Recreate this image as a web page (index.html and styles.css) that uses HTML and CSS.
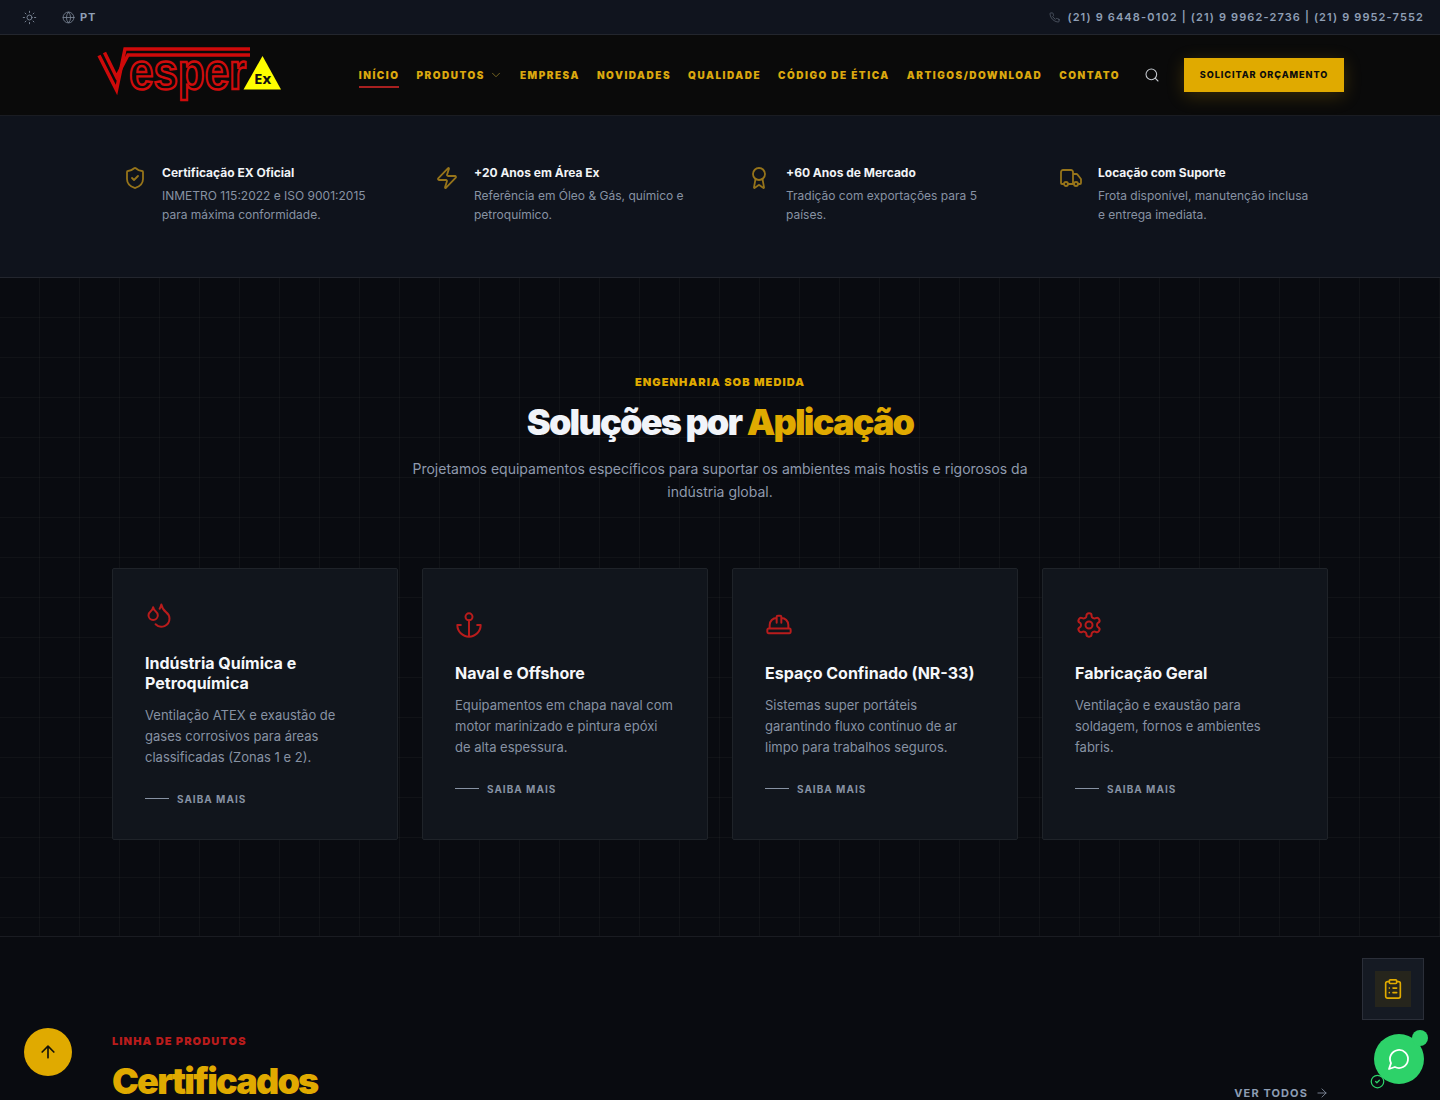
FILE: index.html
```html
<!DOCTYPE html>
<html lang="pt">
<head>
<meta charset="utf-8">
<title>Vesper Ex</title>
<link rel="stylesheet" href="styles.css">
</head>
<body>
<div class="page">
  <div class="topbar">
    <div class="top-left">
      <svg class="ic ic-sun" viewBox="0 0 24 24"><circle cx="12" cy="12" r="4"/><path d="M12 2v2M12 20v2M4.93 4.93l1.41 1.41M17.66 17.66l1.41 1.41M2 12h2M20 12h2M6.34 17.66l-1.41 1.41M19.07 4.93l-1.41 1.41"/></svg>
      <div class="lang">
        <svg class="ic ic-globe" viewBox="0 0 24 24"><circle cx="12" cy="12" r="10"/><path d="M12 2a14.5 14.5 0 0 0 0 20 14.5 14.5 0 0 0 0-20M2 12h20"/></svg>
        <span>PT</span>
      </div>
    </div>
    <div class="top-right">
      <svg class="ic ic-phone" viewBox="0 0 24 24"><path d="M22 16.92v3a2 2 0 0 1-2.18 2 19.79 19.79 0 0 1-8.63-3.07 19.5 19.5 0 0 1-6-6 19.79 19.79 0 0 1-3.07-8.67A2 2 0 0 1 4.11 2h3a2 2 0 0 1 2 1.72 12.84 12.84 0 0 0 .7 2.81 2 2 0 0 1-.45 2.11L8.09 9.91a16 16 0 0 0 6 6l1.27-1.27a2 2 0 0 1 2.11-.45 12.84 12.84 0 0 0 2.81.7A2 2 0 0 1 22 16.92z"/></svg>
      <span>(21) 9 6448-0102 | (21) 9 9962-2736 | (21) 9 9952-7552</span>
    </div>
  </div>

  <header class="header">
    <svg class="logo" viewBox="0 0 190 56" aria-label="Vesper Ex">
      <path class="logo-line" d="M3 8.500 20.500 43 29 2H154"/>
      <path class="logo-line" d="M8.500 5.500 20.500 30 32 8H154"/>
      <text class="logo-word" transform="translate(33 42) scale(.845 1)">esper</text>
      <path class="logo-tri" d="M166.500 9 185 42.500H147.500Z"/>
      <text class="logo-ex" x="158" y="36.500">Ex</text>
    </svg>
    <nav class="nav">
      <a class="nav-link active">INÍCIO</a>
      <a class="nav-link has-caret">PRODUTOS
        <svg class="ic ic-caret" viewBox="0 0 24 24"><path d="m6 9 6 6 6-6"/></svg>
      </a>
      <a class="nav-link">EMPRESA</a>
      <a class="nav-link">NOVIDADES</a>
      <a class="nav-link">QUALIDADE</a>
      <a class="nav-link">CÓDIGO DE ÉTICA</a>
      <a class="nav-link">ARTIGOS/DOWNLOAD</a>
      <a class="nav-link">CONTATO</a>
    </nav>
    <svg class="ic ic-search" viewBox="0 0 24 24"><circle cx="11" cy="11" r="8"/><path d="m21 21-4.300-4.300"/></svg>
    <a class="cta">SOLICITAR ORÇAMENTO</a>
  </header>

  <section class="stats">
    <div class="stats-grid">
      <div class="stat">
        <svg class="ic ic-stat" viewBox="0 0 24 24"><path d="M20 13c0 5-3.500 7.500-7.660 8.950a1 1 0 0 1-.67-.01C7.500 20.500 4 18 4 13V6a1 1 0 0 1 1-1c2 0 4.500-1.200 6.240-2.720a1.170 1.170 0 0 1 1.520 0C14.510 3.810 17 5 19 5a1 1 0 0 1 1 1z"/><path d="m9 12 2 2 4-4"/></svg>
        <div><h3>Certificação EX Oficial</h3><p>INMETRO 115:2022 e ISO 9001:2015 para máxima conformidade.</p></div>
      </div>
      <div class="stat">
        <svg class="ic ic-stat" viewBox="0 0 24 24"><path d="M4 14a1 1 0 0 1-.78-1.630l9.900-10.200a.5.5 0 0 1 .86.46l-1.920 6.020A1 1 0 0 0 13 10h7a1 1 0 0 1 .78 1.630l-9.900 10.200a.5.5 0 0 1-.86-.46l1.920-6.020A1 1 0 0 0 11 14z"/></svg>
        <div><h3>+20 Anos em Área Ex</h3><p>Referência em Óleo &amp; Gás, químico e petroquímico.</p></div>
      </div>
      <div class="stat">
        <svg class="ic ic-stat" viewBox="0 0 24 24"><path d="m15.477 12.890 1.515 8.526a.5.5 0 0 1-.81.47l-3.580-2.687a1 1 0 0 0-1.197 0l-3.586 2.686a.5.5 0 0 1-.81-.469l1.514-8.526"/><circle cx="12" cy="8" r="6"/></svg>
        <div><h3>+60 Anos de Mercado</h3><p>Tradição com exportações para 5 países.</p></div>
      </div>
      <div class="stat">
        <svg class="ic ic-stat" viewBox="0 0 24 24"><path d="M14 18V6a2 2 0 0 0-2-2H4a2 2 0 0 0-2 2v11a1 1 0 0 0 1 1h2M15 18H9M19 18h2a1 1 0 0 0 1-1v-3.650a1 1 0 0 0-.22-.624l-3.480-4.350A1 1 0 0 0 17.520 8H14"/><circle cx="17" cy="18" r="2"/><circle cx="7" cy="18" r="2"/></svg>
        <div><h3>Locação com Suporte</h3><p>Frota disponível, manutenção inclusa e entrega imediata.</p></div>
      </div>
    </div>
  </section>

  <section class="solutions">
    <div class="sol-head">
      <div class="eyebrow-gold">ENGENHARIA SOB MEDIDA</div>
      <h2 class="sol-title">Soluções por <span class="gold">Aplicação</span></h2>
      <p class="sol-text">Projetamos equipamentos específicos para suportar os ambientes mais hostis e rigorosos da indústria global.</p>
    </div>
    <div class="cards">
      <article class="card">
        <svg class="ic ic-card" viewBox="0 0 24 24"><path d="M7 16.300c2.200 0 4-1.830 4-4.050 0-1.160-.57-2.260-1.710-3.190S7.290 6.750 7 5.300c-.29 1.450-1.140 2.840-2.290 3.760S3 11.100 3 12.250c0 2.220 1.800 4.050 4 4.050z"/><path d="M12.560 6.600A10.970 10.970 0 0 0 14 3.020c.5 2.500 2 4.900 4 6.500s3 3.500 3 5.500a6.980 6.980 0 0 1-11.910 4.970"/></svg>
        <h3>Indústria Química e Petroquímica</h3>
        <p>Ventilação ATEX e exaustão de gases corrosivos para áreas classificadas (Zonas 1 e 2).</p>
        <a class="more"><i class="more-line"></i>SAIBA MAIS</a>
      </article>
      <article class="card">
        <svg class="ic ic-card" viewBox="0 0 24 24"><path d="M12 22V8M5 12H2a10 10 0 0 0 20 0h-3"/><circle cx="12" cy="5" r="3"/></svg>
        <h3>Naval e Offshore</h3>
        <p>Equipamentos em chapa naval com motor marinizado e pintura epóxi de alta espessura.</p>
        <a class="more"><i class="more-line"></i>SAIBA MAIS</a>
      </article>
      <article class="card">
        <svg class="ic ic-card" viewBox="0 0 24 24"><path d="M2 18a1 1 0 0 0 1 1h18a1 1 0 0 0 1-1v-2a1 1 0 0 0-1-1H3a1 1 0 0 0-1 1v2zM10 10V5a1 1 0 0 1 1-1h2a1 1 0 0 1 1 1v5M4 15v-3a6 6 0 0 1 6-6M14 6a6 6 0 0 1 6 6v3"/></svg>
        <h3>Espaço Confinado (NR-33)</h3>
        <p>Sistemas super portáteis garantindo fluxo contínuo de ar limpo para trabalhos seguros.</p>
        <a class="more"><i class="more-line"></i>SAIBA MAIS</a>
      </article>
      <article class="card">
        <svg class="ic ic-card" viewBox="0 0 24 24"><path d="M12.220 2h-.44a2 2 0 0 0-2 2v.18a2 2 0 0 1-1 1.730l-.43.25a2 2 0 0 1-2 0l-.15-.08a2 2 0 0 0-2.730.73l-.22.38a2 2 0 0 0 .73 2.730l.15.1a2 2 0 0 1 1 1.720v.51a2 2 0 0 1-1 1.740l-.15.09a2 2 0 0 0-.73 2.730l.22.38a2 2 0 0 0 2.730.73l.15-.08a2 2 0 0 1 2 0l.43.25a2 2 0 0 1 1 1.730V20a2 2 0 0 0 2 2h.44a2 2 0 0 0 2-2v-.18a2 2 0 0 1 1-1.730l.43-.25a2 2 0 0 1 2 0l.15.08a2 2 0 0 0 2.730-.73l.22-.39a2 2 0 0 0-.73-2.730l-.15-.08a2 2 0 0 1-1-1.740v-.5a2 2 0 0 1 1-1.740l.15-.09a2 2 0 0 0 .73-2.730l-.22-.38a2 2 0 0 0-2.730-.73l-.15.08a2 2 0 0 1-2 0l-.43-.25a2 2 0 0 1-1-1.730V4a2 2 0 0 0-2-2z"/><circle cx="12" cy="12" r="3"/></svg>
        <h3>Fabricação Geral</h3>
        <p>Ventilação e exaustão para soldagem, fornos e ambientes fabris.</p>
        <a class="more"><i class="more-line"></i>SAIBA MAIS</a>
      </article>
    </div>
  </section>

  <section class="products">
    <div class="prod-head">
      <div>
        <div class="eyebrow-red">LINHA DE PRODUTOS</div>
        <h2 class="prod-title">Certificados</h2>
      </div>
      <a class="see-all">VER TODOS
        <svg class="ic ic-arrow" viewBox="0 0 24 24"><path d="M5 12h14M12 5l7 7-7 7"/></svg>
      </a>
    </div>
  </section>
</div>

<a class="to-top"><svg class="ic ic-up" viewBox="0 0 24 24"><path d="m5 12 7-7 7 7M12 19V5"/></svg></a>
<a class="quote"><span class="quote-inner"><svg class="ic ic-quote" viewBox="0 0 24 24"><rect x="8" y="2" width="8" height="4" rx="1"/><path d="M16 4h2a2 2 0 0 1 2 2v14a2 2 0 0 1-2 2H6a2 2 0 0 1-2-2V6a2 2 0 0 1 2-2h2M12 11h4M12 16h4M8 11h.01M8 16h.01"/></svg></span></a>
<svg class="ic ic-check" viewBox="0 0 24 24"><circle cx="12" cy="12" r="10"/><path d="m9 12 2 2 4-4"/></svg>
<a class="wa"><svg class="ic ic-wa" viewBox="0 0 24 24"><path d="M7.900 20A9 9 0 1 0 4 16.100L2 22Z"/></svg><span class="wa-dot"></span></a>
</body>
</html>
```

FILE: styles.css
```css
* { box-sizing: border-box; margin: 0; padding: 0; }
html, body { background: #090b10; }
body { font-family: "Inter", "Liberation Sans", sans-serif; color: #fff; overflow: hidden; height: 1100px; }
a { display: inline-flex; text-decoration: none; }
.page { height: 1100px; overflow: hidden; }

.ic { display: block; flex: none; fill: none; stroke: currentColor; stroke-width: 2; stroke-linecap: round; stroke-linejoin: round; }

/* top bar */
.topbar { height: 35px; padding: 0 16px 0 22px; display: flex; align-items: center; justify-content: space-between; background: #10141e; border-bottom: 1px solid #23262e; color: #8f9fb5; font-size: 11px; font-weight: 600; letter-spacing: 1.130px; }
.top-left { display: flex; align-items: center; gap: 25px; }
.lang { display: flex; align-items: center; gap: 5px; font-weight: 700; letter-spacing: 0.08em; }
.ic-sun { width: 15px; height: 15px; stroke-width: 1.500; color: #7d8797; }
.ic-globe { width: 13px; height: 13px; stroke-width: 1.500; color: #7d8797; }
.top-right { display: flex; align-items: center; gap: 7px; }
.ic-phone { width: 11px; height: 11px; color: #5f6876; stroke-width: 1.500; }

/* header */
.header { height: 81px; padding: 0 96px; display: flex; align-items: center; background: #0a0a0a; border-bottom: 1px solid #1a1c22; }
.logo { width: 190px; height: 56px; flex: none; overflow: visible; }
.logo-line { fill: none; stroke: #cf0a0a; stroke-width: 3.500; }
.logo-word { font-family: "Liberation Sans", sans-serif; font-weight: 700; font-size: 52px; fill: #0a0a0a; stroke: #d00c0c; stroke-width: 2.400; }
.logo-tri { fill: #ffff00; }
.logo-ex { font-family: "Noto Sans", sans-serif; font-weight: 700; font-size: 15px; fill: #111; }
.nav { display: flex; align-items: center; gap: 17px; margin-left: auto; }
.nav-link { position: relative; align-items: center; font-size: 10px; font-weight: 900; letter-spacing: 1.510px; color: #dba80f; line-height: 16px; }
.nav-link.active::after { content: ""; position: absolute; left: 0; right: 0; bottom: -5px; height: 2px; background: #a82020; }
.has-caret { gap: 4px; }
.ic-caret { width: 14px; height: 14px; color: #7c6a24; stroke-width: 1.600; }
.ic-search { width: 16px; height: 16px; margin-left: 24px; color: #c4c8ce; stroke-width: 1.600; }
.cta { margin-left: 24px; width: 160px; height: 34px; padding-bottom: 1px; align-items: center; justify-content: center; background: #e0aa00; color: #0c0c0c; font-size: 9.100px; font-weight: 800; letter-spacing: 0.1em; box-shadow: 0 4px 18px rgba(224, 170, 0, 0.22); }

/* stats */
.stats { height: 162px; padding: 46px 112px 0; background: #0f131c; border-bottom: 1px solid #23262e; }
.stats-grid { display: grid; grid-template-columns: repeat(4, 280px); gap: 32px; }
.stat { display: flex; gap: 15px; padding-left: 11px; }
.stat h3 { padding-top: 1px; font-size: 12px; font-weight: 700; line-height: 20px; color: #f1f3f6; }
.stat p { margin-top: 3px; font-size: 12px; line-height: 19px; color: #8792a3; max-width: 216px; }
.ic-stat { width: 24px; height: 24px; margin-top: 4px; color: #96741a; stroke-width: 1.800; }

/* solutions */
.solutions { height: 659px; padding: 96px 112px 0; border-bottom: 1px solid #1a1c22; background-color: #090b10; background-image: linear-gradient(rgba(255, 255, 255, 0.03) 1px, transparent 1px), linear-gradient(90deg, rgba(255, 255, 255, 0.03) 1px, transparent 1px); background-size: 40px 40px; background-position: 0 -1px, -1px 0; }
.sol-head { text-align: center; }
.eyebrow-gold { font-size: 11px; font-weight: 900; line-height: 16px; letter-spacing: 0.1em; color: #e0aa00; }
.sol-title { margin-top: 12px; font-size: 36px; line-height: 40px; font-weight: 900; letter-spacing: -0.05em; color: #f1f4f9; }
.gold { color: #e0aa00; }
.sol-text { margin: 15px auto 0; max-width: 640px; font-size: 14px; line-height: 23px; color: #8f9aad; }
.cards { margin-top: 65px; display: grid; grid-template-columns: repeat(4, 1fr); gap: 24px; }
.card { height: 272px; padding: 32px; display: flex; flex-direction: column; justify-content: center; background: #11151c; border: 1px solid #1f2329; border-radius: 2px; }
.ic-card { width: 28px; height: 28px; color: #b91c1c; stroke-width: 1.700; }
.card h3 { margin-top: 24px; font-size: 16px; font-weight: 700; line-height: 20px; color: #f5f7fa; }
.card p { margin-top: 12px; font-size: 13px; line-height: 21px; color: #8792a3; }
.more { margin-top: 24px; padding-bottom: 2px; align-items: center; gap: 8px; height: 15px; font-size: 10px; font-weight: 700; letter-spacing: 0.1em; color: #8792a3; }
.more-line { display: block; width: 24px; height: 1px; background: #8792a3; }

/* products */
.products { padding: 96px 112px 0; background: #090b10; }
.prod-head { display: flex; justify-content: space-between; align-items: flex-end; }
.eyebrow-red { font-size: 11px; font-weight: 900; line-height: 16px; letter-spacing: 0.1em; color: #b91c1c; }
.prod-title { margin-top: 12px; font-size: 36px; line-height: 40px; font-weight: 900; letter-spacing: -0.05em; color: #e0aa00; }
.see-all { align-items: center; gap: 7px; margin-right: -1px; font-size: 11px; font-weight: 700; letter-spacing: 0.1em; color: #8d9db3; line-height: 16px; }
.ic-arrow { width: 14px; height: 14px; color: #7d8797; stroke-width: 1.600; }

/* floating */
.to-top { position: fixed; left: 24px; top: 1028px; width: 48px; height: 48px; border-radius: 50%; background: #e0aa00; align-items: center; justify-content: center; color: #15130a; }
.ic-up { width: 20px; height: 20px; }
.quote { position: fixed; left: 1362px; top: 958px; width: 62px; height: 62px; align-items: center; justify-content: center; background: #151a23; border: 1px solid #2b2f39; }
.quote-inner { display: flex; width: 36px; height: 36px; align-items: center; justify-content: center; background: #26251c; }
.ic-quote { width: 22px; height: 22px; color: #e0aa00; stroke-width: 1.800; }
.wa { position: fixed; left: 1374px; top: 1034px; width: 50px; height: 50px; border-radius: 50%; background: #2dd269; align-items: center; justify-content: center; color: #fff; }
.ic-wa { width: 24px; height: 24px; stroke-width: 1.800; }
.wa-dot { position: absolute; left: 38px; top: -4px; width: 16px; height: 16px; border-radius: 50%; background: #2dd269; }
.ic-check { position: fixed; left: 1369.500px; top: 1073.500px; width: 15px; height: 15px; color: #2dd269; stroke-width: 2; }
```
